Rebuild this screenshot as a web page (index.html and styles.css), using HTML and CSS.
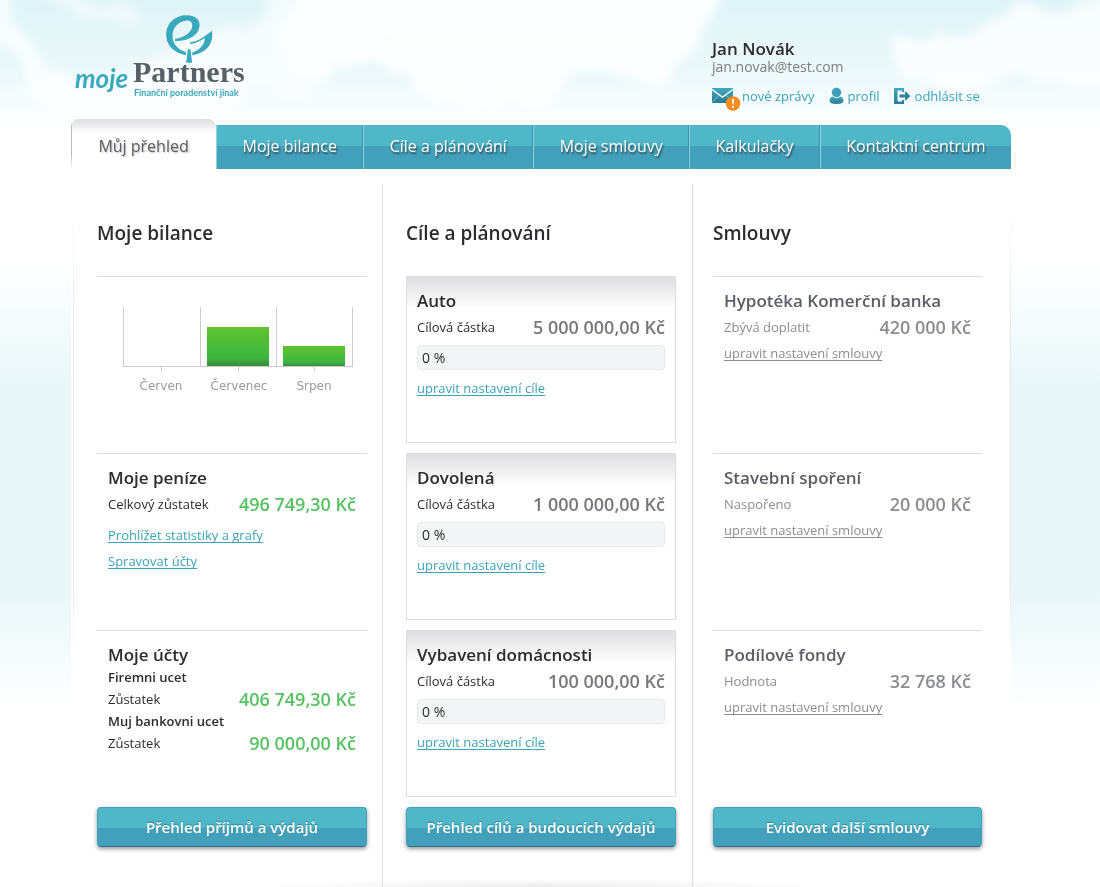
FILE: index.html
```html
<!DOCTYPE html>
<html lang="cs">
<head>
<meta charset="utf-8">
<title>moje Partners – Můj přehled</title>
<meta name="viewport" content="width=device-width, initial-scale=1">
<link rel="stylesheet" href="styles.css">
</head>
<body>
<svg class="sky" viewBox="0 0 1100 220" preserveAspectRatio="xMidYMin slice" aria-hidden="true">
  <defs>
    <linearGradient id="skyFill" x1="0" y1="0" x2="0" y2="1">
      <stop offset="0" stop-color="#dff4f7"/>
      <stop offset=".3" stop-color="#ebf8fa"/>
      <stop offset=".5" stop-color="#f8fdfe"/>
      <stop offset=".6" stop-color="#ffffff"/>
    </linearGradient>
    <filter id="soft" x="-10%" y="-20%" width="120%" height="140%">
      <feTurbulence type="fractalNoise" baseFrequency=".02" numOctaves="3" seed="4"/>
      <feDisplacementMap in="SourceGraphic" scale="40" xChannelSelector="R" yChannelSelector="G"/>
      <feGaussianBlur stdDeviation="5"/>
    </filter>
  </defs>
  <rect width="1100" height="220" fill="url(#skyFill)"/>
  <g fill="#fff" filter="url(#soft)">
    <path d="M-20 -20L15 -10L25 35L45 65L75 75L60 130L30 90L5 50Z" opacity=".7"/>
    <path d="M30 -20L90 10L125 -5L135 20L75 25Z" opacity=".55"/>
    <path d="M60 85L130 75L190 35L250 30L260 -20L420 -20L400 20L330 70L310 100L250 90L190 125L60 130Z" opacity=".6"/>
    <path d="M270 40L310 -20L740 -20L712 15L700 45L650 75L580 80L545 105L490 110L440 100L390 65L320 75Z" opacity=".85"/>
    <path d="M890 30L930 45L970 25L1010 10L1040 15L1120 -10L1120 90L1010 75L960 90L900 85Z" opacity=".75"/>
  </g>
</svg>
<div class="page">
  <header class="header">
    <a class="logo" href="#" aria-label="moje Partners">
      <span class="logo-moje">moje</span>
      <span class="logo-main">
        <svg class="logo-tree" viewBox="318 45 140 144" width="47" height="48" aria-hidden="true">
          <g fill="#3ba9bd">
            <path d="M377 166C340 158 318 135 318 105C318 70 345 46 380 46C408 46 421 62 418 80C414 106 385 124 344 123L345 117C372 112 393 98 396 80C398 66 389 60 376 62C352 66 337 84 337 108C338 132 352 148 378 157Z"/>
            <path d="M390 127C418 122 436 108 455 92C462 128 440 160 396 166L396 158C418 150 433 136 434 114C420 124 405 131 390 132Z"/>
            <path d="M383 148L391 148L396 188L378 188Z"/>
          </g>
        </svg>
        <span class="logo-name">Partners</span>
        <span class="logo-claim">Finanční poradenství jinak</span>
      </span>
    </a>
    <div class="user">
      <strong class="user-name">Jan Novák</strong>
      <span class="user-mail">jan.novak@test.com</span>
      <div class="user-links">
        <a href="#">
          <svg class="mail" width="29" height="23" viewBox="0 0 29 23" aria-hidden="true">
            <defs>
              <linearGradient id="iconFill" x1="0" y1="0" x2="0" y2="1">
                <stop offset="0" stop-color="#41a9c0"/>
                <stop offset="1" stop-color="#2b7a92"/>
              </linearGradient>
            </defs>
            <path fill="url(#iconFill)" d="M0 0h21v15H0z"/>
            <path fill="none" stroke="#eaf8fa" stroke-width="1.500" d="M0 1.500l10.500 7.500L21 1.500"/>
            <path fill="none" stroke="#8cc8d5" stroke-width=".8" d="M0 14.500l7-7.500M21 14.500l-7-7.500"/>
            <circle cx="21" cy="15.500" r="7.300" fill="#f68b1f"/>
            <path fill="#fff" d="M20 11h2l-.4 5.500h-1.200zM20 18h2v2h-2z"/>
          </svg>nové zprávy</a>
        <a href="#">
          <svg width="15" height="18" viewBox="0 0 15 18" aria-hidden="true">
            <path fill="url(#iconFill)" d="M3.800 9.500Q7.500 13 11.200 9.500Q14.500 10.500 14.500 13.500Q14.500 17 7.500 17Q.5 17 .5 13.500Q.5 10.500 3.800 9.500Z"/>
            <circle cx="7.500" cy="5.500" r="4.700" fill="#3c9fb7"/>
          </svg>profil</a>
        <a href="#">
          <svg width="17" height="18" viewBox="0 0 17 18" aria-hidden="true">
            <path fill="url(#iconFill)" d="M0 1h10v4H8V3.500H3.500v11H8V13h2v4H0z"/>
            <path fill="#2f849c" d="M5.500 7.500H11V4l5.500 5-5.500 5v-3.500H5.500z"/>
          </svg>odhlásit se</a>
      </div>
    </div>
  </header>

  <nav class="nav">
    <a class="tab tab-active" href="#" aria-current="page">Můj přehled</a>
    <a class="tab" href="#">Moje bilance</a>
    <a class="tab" href="#">Cíle a plánování</a>
    <a class="tab" href="#">Moje smlouvy</a>
    <a class="tab" href="#">Kalkulačky</a>
    <a class="tab" href="#">Kontaktní centrum</a>
  </nav>

  <main class="board">
    <section class="column">
      <h2>Moje bilance</h2>
      <div class="card card-chart">
        <svg class="chart" viewBox="0 0 270 100" role="img" aria-label="Bilance podle měsíců">
          <defs>
            <linearGradient id="bar" x1="0" y1="0" x2="0" y2="1">
              <stop offset="0" stop-color="#5fc32f"/>
              <stop offset=".8" stop-color="#3db541"/>
              <stop offset="1" stop-color="#3a8b3b"/>
            </linearGradient>
          </defs>
          <path d="M26.500 5v60M103.500 5v60M179.500 5v60M255.500 5v60M26 64.500h230M64.500 65v5M141.500 65v5M217.500 65v5" stroke="#ccc" fill="none"/>
          <rect x="110" y="25" width="62" height="39" fill="url(#bar)"/>
          <rect x="186" y="44" width="62" height="20" fill="url(#bar)"/>
          <g class="chart-labels">
            <text x="64" y="88">Červen</text>
            <text x="142" y="88">Červenec</text>
            <text x="217" y="88">Srpen</text>
          </g>
        </svg>
      </div>
      <div class="card">
        <h3>Moje peníze</h3>
        <div class="row"><span>Celkový zůstatek</span><strong>496 749,30 Kč</strong></div>
        <ul class="links">
          <li><a href="#">Prohlížet statistiky a grafy</a></li>
          <li><a href="#">Spravovat účty</a></li>
        </ul>
      </div>
      <div class="card">
        <h3>Moje účty</h3>
        <h4>Firemni ucet</h4>
        <div class="row"><span>Zůstatek</span><strong>406 749,30 Kč</strong></div>
        <h4>Muj bankovni ucet</h4>
        <div class="row"><span>Zůstatek</span><strong>90 000,00 Kč</strong></div>
      </div>
      <button class="button" type="button">Přehled příjmů a výdajů</button>
    </section>

    <section class="column column-goals">
      <h2>Cíle a plánování</h2>
      <div class="card">
        <h3>Auto</h3>
        <div class="row"><span>Cílová částka</span><strong>5 000 000,00 Kč</strong></div>
        <div class="progress">0 %</div>
        <a href="#">upravit nastavení cíle</a>
      </div>
      <div class="card">
        <h3>Dovolená</h3>
        <div class="row"><span>Cílová částka</span><strong>1 000 000,00 Kč</strong></div>
        <div class="progress">0 %</div>
        <a href="#">upravit nastavení cíle</a>
      </div>
      <div class="card">
        <h3>Vybavení domácnosti</h3>
        <div class="row"><span>Cílová částka</span><strong>100 000,00 Kč</strong></div>
        <div class="progress">0 %</div>
        <a href="#">upravit nastavení cíle</a>
      </div>
      <button class="button" type="button">Přehled cílů a budoucích výdajů</button>
    </section>

    <section class="column column-contracts">
      <h2>Smlouvy</h2>
      <div class="card">
        <h3>Hypotéka Komerční banka</h3>
        <div class="row"><span>Zbývá doplatit</span><strong>420 000 Kč</strong></div>
        <a href="#">upravit nastavení smlouvy</a>
      </div>
      <div class="card">
        <h3>Stavební spoření</h3>
        <div class="row"><span>Naspořeno</span><strong>20 000 Kč</strong></div>
        <a href="#">upravit nastavení smlouvy</a>
      </div>
      <div class="card">
        <h3>Podílové fondy</h3>
        <div class="row"><span>Hodnota</span><strong>32 768 Kč</strong></div>
        <a href="#">upravit nastavení smlouvy</a>
      </div>
      <button class="button" type="button">Evidovat další smlouvy</button>
    </section>
  </main>
</div>
</body>
</html>
```

FILE: styles.css
```css
* { box-sizing: border-box; }

body {
  margin: 0;
  padding-right: 18px;
  font-family: "Open Sans", sans-serif;
  font-size: 13px;
  line-height: 22px;
  color: #2b2b30;
  background: #fff linear-gradient(#fff 260px, #e9f7f9 390px, #e9f7f9 590px, #fff 710px) no-repeat;
}

a { color: #3ba3ba; text-decoration: none; }
h2, h3, h4, ul { margin: 0; padding: 0; }
h2, h3, h4 { font-weight: 600; }

.sky {
  position: absolute;
  top: 0;
  left: 0;
  width: 100%;
  height: 220px;
  z-index: -1;
}

.page { max-width: 940px; margin: 0 auto; }

.header {
  display: flex;
  justify-content: space-between;
  min-height: 119px;
}

.logo { display: flex; align-items: flex-end; height: 99px; padding-left: 4px; }
.logo-moje {
  width: 58px;
  padding-bottom: 7px;
  font: italic 700 26px/28px Lato, sans-serif;
  color: #3ba9bd;
}
.logo-main { display: flex; flex-direction: column; }
.logo-tree { margin-left: 33px; margin-bottom: -6px; }
.logo-name {
  font: 700 30px/30px "Liberation Serif", serif;
  color: #566066;
}
.logo-claim {
  padding-left: 1px;
  font: 700 9px/12px Lato, sans-serif;
  color: #3ba9bd;
}

.user {
  display: flex;
  flex-direction: column;
  width: 299px;
  padding-top: 39px;
}
.user-name { font-size: 17px; font-weight: 600; line-height: 20px; }
.user-mail { font-size: 14px; line-height: 16px; color: #7b7d82; }
.user-links { display: flex; gap: 14px; padding-top: 9px; }
.user-links a { display: flex; align-items: center; gap: 4px; height: 24px; }
.user-links .mail { margin-bottom: -6px; margin-right: -3px; }

.nav {
  display: flex;
  align-items: flex-end;
  font-size: 16px;
}
.tab {
  flex: 1 1 auto;
  height: 44px;
  line-height: 42px;
  text-align: center;
  color: #fff;
  text-shadow: 1px 2px 2px #2b4a50;
  background: linear-gradient(#4fb7c8 21px, #43a0ba 21px);
  border-left: 1px solid #8fd3e0;
  border-right: 1px solid #3a92aa;
}
.tab:last-child { border-top-right-radius: 10px; border-right: 0; }
.tab-active {
  height: 50px;
  padding: 0 2px;
  line-height: 54px;
  color: #5c5d66;
  text-shadow: 1px 1px 2px #bbb;
  background:
    linear-gradient(#bbb, #bbb 70%, #fff) left / 1px 100% no-repeat,
    linear-gradient(#dcdde0, #fff 14px);
  border: 0;
  border-radius: 8px 8px 0 0;
}

.board {
  display: grid;
  grid-template-columns: 312fr 310fr 318fr;
  padding-top: 15px;
  background:
    linear-gradient(transparent 30px, #e4e4e6 180px, #e4e4e6 400px, transparent 490px) 2px 0 / 1px 100% no-repeat,
    linear-gradient(transparent 30px, #e4e4e6 180px, #e4e4e6 400px, transparent 490px) right / 1px 100% no-repeat,
    radial-gradient(280px 8px at 50% 100%, #ececec, #fff) bottom / 560px 8px no-repeat,
    #fff;
}
.column {
  display: flex;
  flex-direction: column;
  gap: 10px;
  padding: 37px 15px 40px 26px;
  border-right: 1px solid #ddd;
}
.column-goals { padding-left: 24px; padding-right: 16px; }
.column-goals,
.column-contracts { margin-left: -1px; border-left: 1px solid transparent; }
.column-goals { padding-left: 23px; }
.column-contracts { padding-left: 20px; padding-right: 29px; border-right: 0; }

h2 { font-size: 19px; line-height: 24px; padding-bottom: 21px; box-sizing: content-box; }
h3 { font-size: 17px; line-height: 26px; }
h4 { font-size: 13px; line-height: 18px; }

.card {
  min-height: 167px;
  padding: 11px;
  border-top: 1px solid #ddd;
}
.card-chart { padding: 25px 0 0; }
.row { display: flex; justify-content: space-between; align-items: center; height: 26px; }
.row strong { font-size: 18px; font-weight: 600; color: #57c262; }
.links { list-style: none; padding-top: 5px; }
.card a {
  line-height: 26px;
  text-decoration: underline 1px;
  text-underline-offset: 2px;
  text-decoration-skip-ink: none;
}

.column-goals .card {
  padding: 11px 10px;
  border: 1px solid #ddd;
  background: linear-gradient(#dfdfe1, #fff 32px);
}
.column-goals .row strong { color: #77787f; }
.progress {
  margin: 5px 0;
  padding: 0 4px;
  height: 25px;
  line-height: 24px;
  font-size: 14px;
  border: 1px solid #e8e8ea;
  border-radius: 4px;
  background: #f4f5f7;
}

.column-contracts h3 { color: #5c5d66; }
.column-contracts .row,
.column-contracts .card a { color: #8c8d94; }
.column-contracts .row strong { color: #8c8d94; }

.chart { display: block; width: 100%; }
.chart-labels {
  font: 12px "DejaVu Sans", sans-serif;
  fill: #999;
  text-anchor: middle;
}

.button {
  height: 40px;
  padding: 0;
  font: 600 15px/36px "Open Sans", sans-serif;
  color: #fff;
  text-shadow: 0 -1px 1px #34818f;
  background: linear-gradient(#4fb7c8 20px, #43a0ba 20px);
  border: 1px solid #43a0ba;
  border-bottom-color: #2d6f84;
  border-radius: 4px;
  box-shadow: 0 2px 4px #999;
  cursor: pointer;
}
```
